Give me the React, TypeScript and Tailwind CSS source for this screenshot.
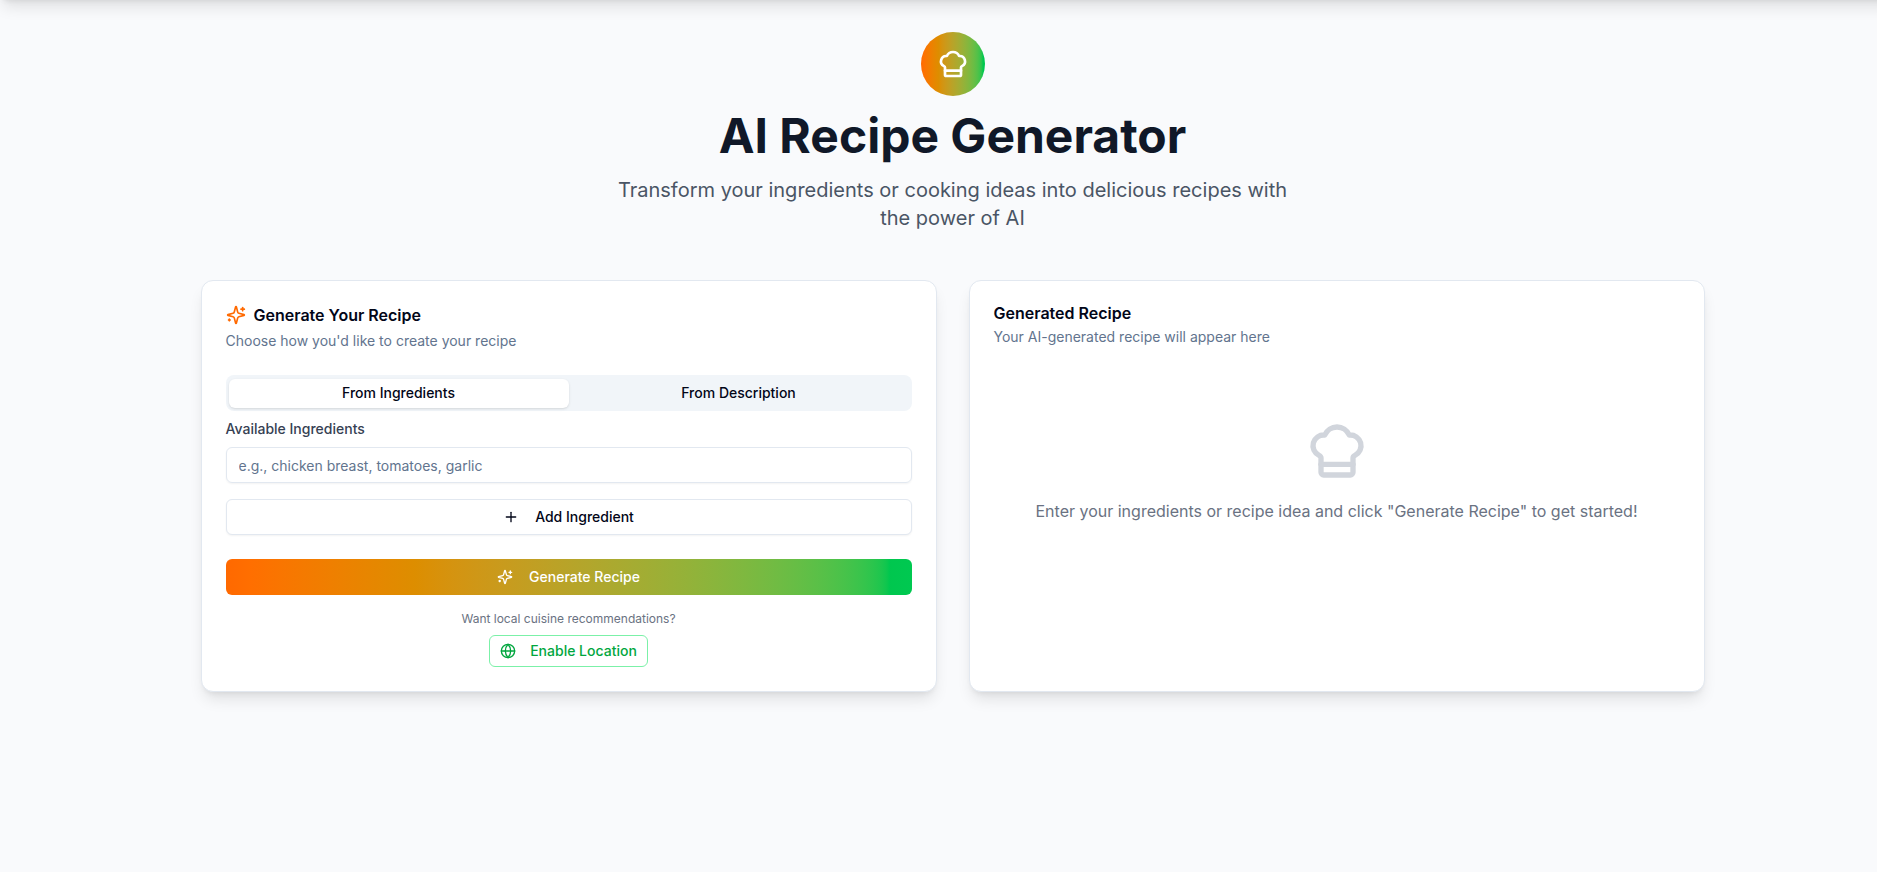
import { ChefHat, Globe, Plus } from "lucide-react";
import type { ReactNode } from "react";

function Sparkles({ className }: { className?: string }) {
  return (
    <svg
      className={className}
      viewBox="0 0 24 24"
      fill="none"
      stroke="currentColor"
      strokeWidth="2"
      strokeLinecap="round"
      strokeLinejoin="round"
    >
      <path d="M9.937 15.5A2 2 0 0 0 8.5 14.063l-6.135-1.582a.5.5 0 0 1 0-.962L8.5 9.936A2 2 0 0 0 9.937 8.5l1.582-6.135a.5.5 0 0 1 .963 0L14.063 8.5A2 2 0 0 0 15.5 9.937l6.135 1.581a.5.5 0 0 1 0 .964L15.5 14.063a2 2 0 0 0-1.437 1.437l-1.582 6.135a.5.5 0 0 1-.963 0z" />
      <path d="M20 3v4" />
      <path d="M22 5h-4" />
      <path d="M4 17v2" />
      <path d="M5 18H3" />
    </svg>
  );
}

function Card({ children }: { children: ReactNode }) {
  return (
    <section className="flex flex-col gap-6 rounded-xl border border-slate-200 bg-white p-6 shadow-lg">
      {children}
    </section>
  );
}

function GeneratorCard() {
  return (
    <Card>
      <header className="flex flex-col gap-1.5">
        <h2 className="flex items-center gap-2 leading-none font-semibold">
          <Sparkles className="size-5 text-orange-500" />
          Generate Your Recipe
        </h2>
        <p className="text-sm text-slate-500">Choose how you'd like to create your recipe</p>
      </header>

      <div className="flex flex-col">
        <div className="grid h-9 grid-cols-2 items-center rounded-lg bg-slate-100 p-[3px] text-sm font-medium">
          <button className="h-[29px] rounded-md bg-white shadow-sm">From Ingredients</button>
          <button className="h-[29px] rounded-md">From Description</button>
        </div>

        <label htmlFor="ingredient" className="mt-2 mb-2 text-sm font-medium text-gray-700">
          Available Ingredients
        </label>
        <input
          id="ingredient"
          placeholder="e.g., chicken breast, tomatoes, garlic"
          className="h-9 rounded-md border border-slate-200 px-3 py-1 text-sm shadow-xs placeholder:text-slate-500"
        />
        <button className="mt-4 flex h-9 items-center justify-center gap-4 rounded-md border border-slate-200 bg-white text-sm font-medium shadow-xs">
          <Plus className="size-4" />
          Add Ingredient
        </button>

        <button className="mt-6 flex h-9 items-center justify-center gap-4 rounded-md bg-linear-to-r from-orange-500 to-green-500 text-sm font-medium text-white">
          <Sparkles className="size-4" />
          Generate Recipe
        </button>

        <div className="mt-4 flex flex-col items-center gap-2">
          <p className="text-xs text-gray-500">Want local cuisine recommendations?</p>
          <button className="flex h-8 items-center gap-3.5 rounded-md border border-green-300 bg-white px-2.5 text-sm font-medium text-green-600">
            <Globe className="size-4" />
            Enable Location
          </button>
        </div>
      </div>
    </Card>
  );
}

function ResultCard() {
  return (
    <Card>
      <header className="flex flex-col gap-1.5">
        <h2 className="leading-none font-semibold">Generated Recipe</h2>
        <p className="text-sm text-slate-500">Your AI-generated recipe will appear here</p>
      </header>
      <div className="flex flex-col items-center gap-4 py-12 text-gray-500">
        <ChefHat className="size-16 text-gray-300" />
        <p>Enter your ingredients or recipe idea and click "Generate Recipe" to get started!</p>
      </div>
    </Card>
  );
}

export default function App() {
  return (
    <div className="min-h-screen overflow-hidden bg-[#f9fafc] font-['Inter',sans-serif] text-slate-950">
      <div className="-mt-8 -mr-5 h-8 shadow-lg" />
      <main className="pt-8 pl-[28px]">
        <div className="mx-auto w-[1504px]">
          <div className="mb-12 flex flex-col items-center text-center">
            <div className="mb-4 flex size-16 items-center justify-center rounded-full bg-linear-to-r from-orange-500 to-green-500">
              <ChefHat className="size-8 text-white" />
            </div>
            <h1 className="mb-4 text-5xl leading-none font-bold text-gray-900">AI Recipe Generator</h1>
            <p className="max-w-2xl text-xl text-gray-600">
              Transform your ingredients or cooking ideas into delicious recipes with the power of AI
            </p>
          </div>
          <div className="grid grid-cols-2 gap-8">
            <GeneratorCard />
            <ResultCard />
          </div>
        </div>
      </main>
    </div>
  );
}
